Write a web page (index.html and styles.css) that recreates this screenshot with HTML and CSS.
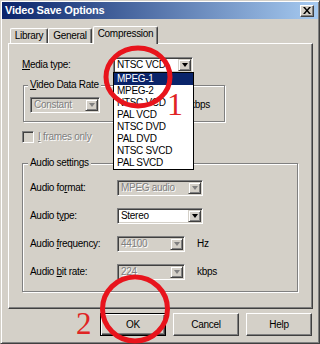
FILE: index.html
```html
<!DOCTYPE html>
<html>
<head>
<meta charset="utf-8">
<title>Video Save Options</title>
<link rel="stylesheet" href="styles.css">
</head>
<body>
<div class="window">
  <div class="titlebar">
    <span class="title">Video Save Options</span>
    <span class="close"><svg width="8" height="7" viewBox="0 0 8 7"><path d="M0 0h2l2 2.4L6 0h2L5 3.5 8 7H6L4 4.6 2 7H0l3-3.5z" fill="#000"/></svg></span>
  </div>
  <div class="body">
    <div class="tabs">
      <div class="tab t-lib">Library</div>
      <div class="tab t-gen">General</div>
      <div class="tab t-comp active">Compression</div>
    </div>
    <div class="panel">
      <div class="row media">
        <span class="lbl lbl-media"><u>M</u>edia type:</span>
        <div class="combo w-media"><span class="val">NTSC VCD</span><span class="arrow"></span></div>
      </div>
      <fieldset class="group video">
        <legend><u>V</u>ideo Data Rate</legend>
        <div class="row">
          <div class="combo disabled w-const"><span class="val">Constant</span><span class="arrow"></span></div>
          <span class="unit unit-video">kbps</span>
        </div>
      </fieldset>
      <div class="check disabled">
        <span class="box"></span>
        <span class="ctext"><u>I</u> frames only</span>
      </div>
      <fieldset class="group audio">
        <legend>Audio settings</legend>
        <div class="arows">
          <div class="arow">
            <span class="lbl lbl-audio">Audio fo<u>r</u>mat:</span>
            <div class="combo disabled w-wide"><span class="val">MPEG audio</span><span class="arrow"></span></div>
          </div>
          <div class="arow">
            <span class="lbl lbl-audio">Audio t<u>y</u>pe:</span>
            <div class="combo w-wide"><span class="val">Stereo</span><span class="arrow"></span></div>
          </div>
          <div class="arow">
            <span class="lbl lbl-audio">Audio <u>f</u>requency:</span>
            <div class="combo disabled w-narrow"><span class="val">44100</span><span class="arrow"></span></div>
            <span class="unit">Hz</span>
          </div>
          <div class="arow">
            <span class="lbl lbl-audio">Audio <u>b</u>it rate:</span>
            <div class="combo disabled w-narrow"><span class="val">224</span><span class="arrow"></span></div>
            <span class="unit">kbps</span>
          </div>
        </div>
      </fieldset>
    </div>
    <div class="buttons">
      <div class="btn default">OK</div>
      <div class="btn">Cancel</div>
      <div class="btn">Help</div>
    </div>
  </div>
</div>

<ul class="droplist">
  <li class="sel">MPEG-1</li>
  <li>MPEG-2</li>
  <li>NTSC VCD</li>
  <li>PAL VCD</li>
  <li>NTSC DVD</li>
  <li>PAL DVD</li>
  <li>NTSC SVCD</li>
  <li>PAL SVCD</li>
</ul>

<svg class="marks" width="320" height="344" viewBox="0 0 320 344">
  <ellipse cx="138" cy="77" rx="32" ry="29" fill="none" stroke="#e8141c" stroke-width="5"/>
  <ellipse cx="135" cy="309" rx="32.5" ry="32" fill="none" stroke="#e8141c" stroke-width="5"/>
</svg>
<span class="num n1">1</span>
<span class="num n2">2</span>
</body>
</html>
```

FILE: styles.css
```css
* { box-sizing: border-box; }

html, body {
  margin: 0;
  padding: 0;
}

body {
  position: relative;
  width: 320px;
  height: 344px;
  overflow: hidden;
  background: #d4d0c8;
  font-family: "Liberation Sans", Arial, sans-serif;
  font-size: 10px;
  letter-spacing: -0.3px;
  color: #000;
}

u { text-decoration: underline; text-underline-offset: 1px; }

.window {
  width: 320px;
  height: 344px;
  background: #d4d0c8;
  border: 1px solid;
  border-color: #d4d0c8 #404040 #404040 #d4d0c8;
  box-shadow: inset 1px 1px #fff, inset -1px -1px #808080;
  padding: 1px;
  display: flex;
  flex-direction: column;
}

.titlebar {
  height: 17px;
  flex: none;
  background: linear-gradient(to right, #0a246a, #a6caf0);
  display: flex;
  align-items: center;
  justify-content: space-between;
  padding: 0 4px 0 3px;
}

.title {
  color: #fff;
  font-weight: bold;
  font-size: 11px;
  letter-spacing: -0.2px;
  line-height: 13px;
}

.close {
  width: 14px;
  height: 12px;
  background: #d4d0c8;
  border: 1px solid;
  border-color: #fff #404040 #404040 #fff;
  box-shadow: inset -1px -1px #808080;
  display: flex;
  align-items: center;
  justify-content: center;
}

.body {
  padding: 7px 5px 0 6px;
  display: flex;
  flex-direction: column;
}

/* tabs */
.tabs {
  display: flex;
  align-items: flex-start;
  height: 18px;
  margin-bottom: -1px;
  padding-left: 2px;
  position: relative;
  z-index: 1;
}

.tab {
  height: 15px;
  margin-top: 2px;
  border-top: 1px solid #fff;
  border-left: 1px solid #fff;
  border-right: 1px solid #404040;
  box-shadow: inset -1px 0 #808080;
  border-radius: 2px 2px 0 0;
  text-align: center;
  line-height: 13px;
  background: #d4d0c8;
}

.t-lib { width: 38px; }
.t-gen { width: 44px; }
.t-comp { width: 65px; margin-left: 1px; }

.tab.active {
  height: 18px;
  margin-top: 0;
  line-height: 14px;
}

/* panel */
.panel {
  height: 266px;
  border: 1px solid;
  border-color: #fff #404040 #404040 #fff;
  box-shadow: inset -1px -1px #808080;
  padding: 13px 0 0 13px;
  display: flex;
  flex-direction: column;
  align-items: flex-start;
}

.row {
  display: flex;
  align-items: center;
}

.lbl { line-height: 12px; white-space: nowrap; }
.lbl-media { width: 91px; }
.lbl-audio { width: 87px; }

/* combo boxes */
.combo {
  display: flex;
  height: 16px;
  padding: 1px;
  background: #fff;
  border: 1px solid;
  border-color: #808080 #fff #fff #808080;
  box-shadow: inset 1px 1px #404040, inset -1px -1px #d4d0c8;
}

.combo .val {
  flex: 1;
  padding-left: 2px;
  line-height: 12px;
  white-space: nowrap;
  overflow: hidden;
}

.combo .arrow {
  width: 13px;
  height: 12px;
  flex: none;
  background: #d4d0c8;
  border: 1px solid;
  border-color: #d4d0c8 #404040 #404040 #d4d0c8;
  box-shadow: inset 1px 1px #fff, inset -1px -1px #808080;
  display: flex;
  align-items: center;
  justify-content: center;
}

.combo .arrow::after {
  content: "";
  width: 0;
  height: 0;
  border-top: 4px solid #000;
  border-left: 3.5px solid transparent;
  border-right: 3.5px solid transparent;
}

.combo.disabled { background: #d4d0c8; }
.combo.disabled .val { color: #808080; text-shadow: 1px 1px #fff; }
.combo.disabled .arrow::after { border-top-color: #808080; }

.w-media { width: 80px; }
.w-const { width: 70px; }
.w-wide { width: 86px; }
.w-narrow { width: 68px; }

/* group boxes */
.group {
  margin: 0;
  border: 1px solid #808080;
  box-shadow: inset 1px 1px #fff, 1px 1px #fff;
  min-width: 0;
}

.group legend {
  padding: 0 2px;
  margin-left: -2px;
  line-height: 12px;
  background: #d4d0c8;
}

.video {
  width: 202px;
  margin-top: 6px;
  margin-left: 1px;
  padding: 6px 6px 8px 6px;
}

.unit { line-height: 12px; }
.unit-video { margin-left: 90px; }

/* checkbox */
.check {
  display: flex;
  align-items: center;
  margin-top: 9px;
  gap: 4px;
}

.check .box {
  width: 12px;
  height: 12px;
  background: #d4d0c8;
  border: 1px solid;
  border-color: #808080 #fff #fff #808080;
  box-shadow: inset 1px 1px #404040, inset -1px -1px #d4d0c8;
}

.check.disabled .ctext {
  color: #808080;
  text-shadow: 1px 1px #fff;
  line-height: 12px;
}

.audio {
  width: 276px;
  margin-top: 14px;
  padding: 11px 7px 11px 7px;
}

.arows {
  display: flex;
  flex-direction: column;
  gap: 12px;
}

.arow {
  display: flex;
  align-items: center;
}

.arow .unit { margin-left: 12px; }

/* buttons */
.buttons {
  display: flex;
  justify-content: flex-end;
  gap: 7px;
  margin-top: 4px;
  padding-right: 1px;
}

.btn {
  width: 66px;
  height: 23px;
  border: 1px solid;
  border-color: #fff #404040 #404040 #fff;
  box-shadow: inset -1px -1px #808080;
  display: flex;
  align-items: center;
  justify-content: center;
  line-height: 12px;
}

.btn.default {
  border-color: #000;
  box-shadow: inset 1px 1px #fff, inset -1px -1px #404040, inset -2px -2px #808080;
}

/* open drop-down list (overlay) */
.droplist {
  position: absolute;
  left: 113px;
  top: 72px;
  width: 81px;
  margin: 0;
  padding: 0;
  list-style: none;
  background: #fff;
  border: 1px solid #000;
}

.droplist li {
  height: 12px;
  line-height: 12px;
  padding-left: 3px;
  white-space: nowrap;
}

.droplist li.sel {
  background: #0a246a;
  color: #fff;
}

/* annotations */
.marks {
  position: absolute;
  left: 0;
  top: 0;
  pointer-events: none;
}

.num {
  position: absolute;
  font-family: "Liberation Serif", "Times New Roman", serif;
  color: #e02424;
  line-height: 32px;
  letter-spacing: 0;
}

.n1 { left: 167px; top: 88px; font-size: 32px; }
.n2 { left: 76px; top: 308px; font-size: 31px; }
```
